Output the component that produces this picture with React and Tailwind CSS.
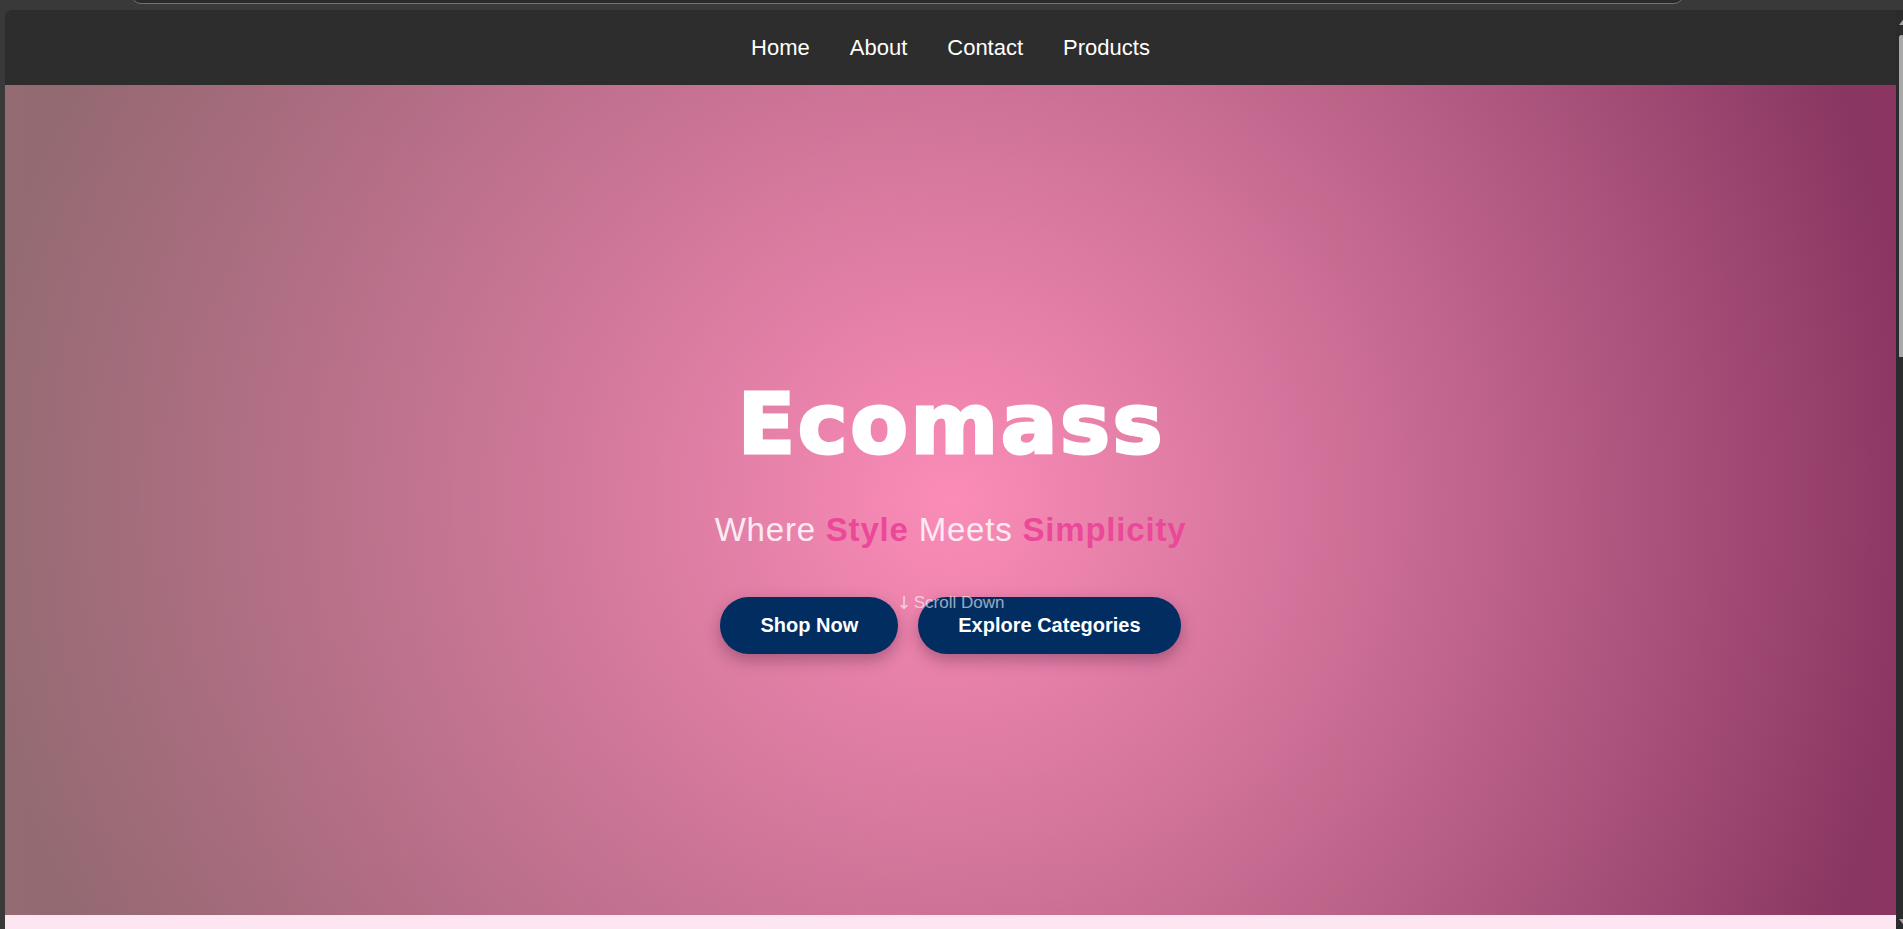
const NAV = ['Home', 'About', 'Contact', 'Products']

export default function App() {
  return (
    <div className="relative h-[929px] w-full overflow-hidden bg-[#393939] font-['Liberation_Sans',Arial,sans-serif]">
      {/* barra superior del navegador */}
      <div className="absolute left-[131px] top-[-20px] h-[24px] w-[1553px] rounded-b-[10px] border border-[#737373] bg-[#2a2a2a]" />

      {/* ventana */}
      <div className="ml-[5px] mt-[10px] flex h-[919px] overflow-hidden rounded-tl-[8px] bg-[#2d2d2d]">
        <div className="flex min-w-0 flex-1 flex-col">
          {/* Nav */}
          <nav className="flex h-[75px] shrink-0 items-center justify-center gap-10 bg-[#2d2d2d] pb-[1px]">
            {NAV.map((item) => (
              <a key={item} href="#" className="text-[22px] text-white">
                {item}
              </a>
            ))}
          </nav>

          {/* Hero */}
          <section className="relative flex h-[830px] shrink-0 flex-col items-center pt-[295px] [background:radial-gradient(975px_circle_at_50%_50%,rgba(251,140,184,1),rgba(251,140,184,0)),linear-gradient(to_right,#946b72,#8a3562)]">
            <h1 className="pl-[2px] font-['DejaVu_Sans',sans-serif] text-[84px] font-bold leading-[88px] tracking-[2.6px] text-white [-webkit-text-stroke:3px_white]">
              Ecomass
            </h1>
            <p className="mt-[43px] text-[33px] leading-[38px] tracking-[0.8px] text-[#fdebf3]">
              Where <span className="font-bold text-[#ec4899]">Style</span> Meets{' '}
              <span className="font-bold text-[#ec4899]">Simplicity</span>
            </p>
            <div className="mt-[48px] flex gap-5">
              <button className="rounded-full bg-[#022d61] px-10 py-[17px] text-[20px] font-bold leading-[23px] text-white shadow-[0_6px_16px_rgba(60,20,50,0.35)]">
                Shop Now
              </button>
              <button className="rounded-full bg-[#022d61] px-10 py-[17px] text-[20px] font-bold leading-[23px] text-white shadow-[0_6px_16px_rgba(60,20,50,0.35)]">
                Explore Categories
              </button>
            </div>

            {/* Scroll indicator */}
            <div className="absolute left-1/2 top-[507px] flex -translate-x-1/2 items-center gap-[2px] text-[17px] leading-[22px] text-white/60">
              <span className="font-['DejaVu_Sans',sans-serif] text-[18px]">↓</span>
              <span>Scroll Down</span>
            </div>
          </section>

          <div className="flex-1 bg-[#fde6f2]" />
        </div>

        {/* Scrollbar */}
        <div className="relative w-[7px] shrink-0 bg-[#2b2b2b]">
          <div className="absolute left-[3px] top-[10px] h-0 w-0 border-x-[4px] border-b-[5px] border-x-transparent border-b-[#a5a5a5]" />
          <div className="absolute left-[3px] top-[25px] h-[322px] w-[5px] rounded-t-[3px] bg-[#a8a8a8]" />
          <div className="absolute left-[3px] top-[909px] h-0 w-0 border-x-[4px] border-t-[5px] border-x-transparent border-t-[#a5a5a5]" />
        </div>
      </div>
    </div>
  )
}
